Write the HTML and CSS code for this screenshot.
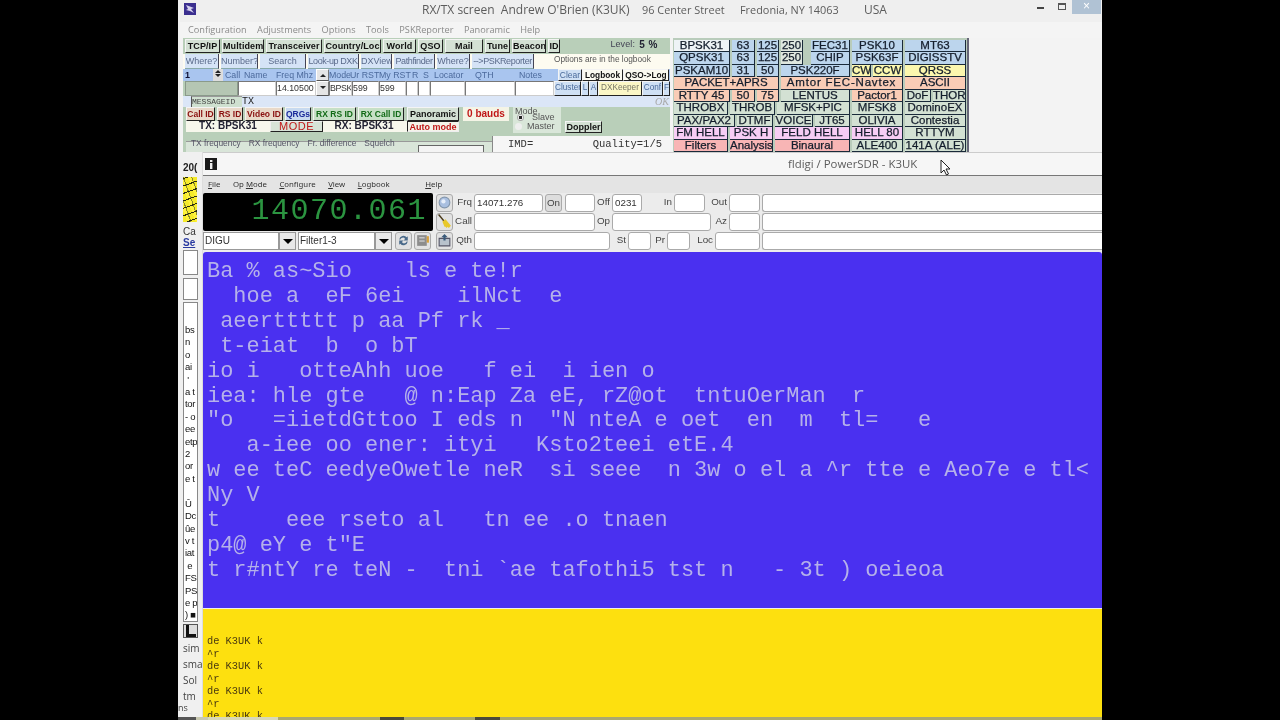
FILE: index.html
```html
<!DOCTYPE html>
<html lang="en">
<head>
<meta charset="utf-8">
<title>fldigi / PowerSDR - K3UK</title>
<link rel="stylesheet" href="styles.css">
</head>
<body>
<main class="stage">
  <section class="rx">
    <header class="rx-title">
      <svg class="rx-icon" viewBox="0 0 12 12"><rect width="12" height="12" fill="#3b2f8f"/><path d="M2 2l8 3-3 1 3 4-4-2-4-1 2-1z" fill="#d7d3ee"/></svg>
      <div class="rx-title-text"><span>RX/TX screen&nbsp; Andrew O'Brien (K3UK)</span><span class="narrow">96 Center Street</span><span class="narrow">Fredonia, NY 14063</span><span>USA</span></div>
      <div class="win-ctl"><span class="ctl-min"></span><span class="ctl-max"></span><span class="ctl-close">×</span></div>
    </header>
    <nav class="rx-menu"><span>Configuration</span><span>Adjustments</span><span>Options</span><span>Tools</span><span>PSKReporter</span><span>Panoramic</span><span>Help</span></nav>
    <div class="rx-panels">
      <div class="left-panel">
        <div class="row-a">
          <b class="btn">TCP/IP</b><b class="btn">Multidem</b><b class="btn">Transceiver</b><b class="btn">Country/Loc</b><b class="btn">World</b><b class="btn">QSO</b><b class="btn">Mail</b><b class="btn">Tune</b><b class="btn">Beacon</b><b class="btn">ID</b>
          <span class="level">Level:</span><b class="level-val">5 %</b>
        </div>
        <div class="row-b">
          <span class="tab">Where?</span><span class="tab">Number?</span><span class="tab">Search</span><span class="tab tight">Look-up DXK</span><span class="tab">DXView</span><span class="tab tight">Pathfinder</span><span class="tab">Where?</span><span class="tab tight">--&gt;PSKReporter</span><span class="note">Options are in the logbook</span>
        </div>
        <div class="row-c">
          <b class="one">1</b><span class="spin"><i></i><i></i></span><span>Call</span><span>Name</span><span>Freq Mhz</span><span class="arrow up"></span><span>Mode</span><span>Ur RST</span><span>My RST</span><span>R</span><span>S</span><span>Locator</span><span>QTH</span><span>Notes</span><span class="btn lite">Clear</span><b class="btn plain">Logbook</b><b class="btn plain">QSO-&gt;Log</b>
        </div>
        <div class="row-d">
          <span class="gray"></span><span class="cell"></span><span class="cell">14.10500</span><span class="arrow down"></span><span class="cell tight">BPSK</span><span class="cell">599</span><span class="cell">599</span><span class="cell"></span><span class="cell"></span><span class="cell"></span><span class="cell"></span><span class="cell"></span><span class="btn lite">Cluster</span><span class="btn lite">L</span><span class="btn lite">A</span><span class="btn cream">DXKeeper</span><span class="btn lite">Conf</span><span class="btn lite">F</span>
        </div>
        <div class="row-e"><span class="msg-tab">MESSAGEID</span><span class="msg-tx">TX</span><span class="ok">OK</span></div>
        <div class="mid">
          <div class="mid-left">
            <div class="row-f">
              <b class="btn red">Call ID</b><b class="btn red">RS ID</b><b class="btn red">Video ID</b><b class="btn blue">QRGs</b><b class="btn green">RX RS ID</b><b class="btn green">RX Call ID</b>
            </div>
            <div class="row-g"><b>TX: BPSK31</b><span class="btn mode">MODE</span><b>RX: BPSK31</b></div>
          </div>
          <div class="mid-pan">
            <b class="btn">Panoramic</b><b class="bauds">0 bauds</b><b class="btn auto">Auto mode</b>
          </div>
          <div class="mode-group">
            <span class="mode-label">Mode</span>
            <span class="radio-row"><i class="radio on"></i>Slave</span>
            <span class="radio-row"><i class="radio"></i>Master</span>
          </div>
          <b class="btn doppler">Doppler</b>
        </div>
        <div class="row-h">
          <div class="freq-group"><span>TX frequency</span><span>RX frequency</span><span>Fr. difference</span><span>Squelch</span><i class="sq-box"></i></div>
          <div class="imd"><span>IMD=</span><span>Quality=1/5</span></div>
        </div>
      </div>
      <div class="modes">
        <div class="m r12"><b class="sel">BPSK31</b><b class="bl">63</b><b class="bl">125</b><b class="wh">250</b><b class="bl fec">FEC31</b><b class="bl">PSK10</b><b class="bl">MT63</b></div>
        <div class="m r12"><b class="bl">QPSK31</b><b class="bl">63</b><b class="bl">125</b><b class="wh">250</b><b class="bl fec">CHIP</b><b class="bl">PSK63F</b><b class="bl">DIGISSTV</b></div>
        <div class="m r3"><b class="bl">PSKAM10</b><b class="bl">31</b><b class="bl">50</b><b class="bl">PSK220F</b><b class="ye">CW</b><b class="ye">CCW</b><b class="ye">QRSS</b></div>
        <div class="m r4"><b class="sa">PACKET+APRS</b><b class="sa wide">Amtor FEC-Navtex</b><b class="sa">ASCII</b></div>
        <div class="m r5"><b class="sa">RTTY 45</b><b class="sa">50</b><b class="sa">75</b><b class="gr">LENTUS</b><b class="sa">Pactor1</b><b class="gr">DoF</b><b class="gr">THOR</b></div>
        <div class="m r6"><b class="gr">THROBX</b><b class="gr">THROB</b><b class="gr">MFSK+PIC</b><b class="gr">MFSK8</b><b class="gr">DominoEX</b></div>
        <div class="m r7"><b class="gr">PAX/PAX2</b><b class="gr">DTMF</b><b class="gr">VOICE</b><b class="gr">JT65</b><b class="gr">OLIVIA</b><b class="gr">Contestia</b></div>
        <div class="m r8"><b class="pi">FM HELL</b><b class="pi">PSK H</b><b class="pi">FELD HELL</b><b class="pi">HELL 80</b><b class="gr">RTTYM</b></div>
        <div class="m r8"><b class="re">Filters</b><b class="re">Analysis</b><b class="re">Binaural</b><b class="gr">ALE400</b><b class="gr">141A (ALE)</b></div>
      </div>
    </div>
    <aside class="strip">
      <span class="strip-20">20(</span>
      <span class="strip-wf"></span>
      <span class="strip-ca">Ca</span>
      <span class="strip-se">Se</span>
      <span class="strip-box s1"></span>
      <span class="strip-box s2"></span>
      <div class="strip-list"><span>bs</span><span>n</span><span>o</span><span>ai</span><span>&nbsp;'</span><span>a t</span><span>tor</span><span>- o</span><span>ee</span><span>etp</span><span>2</span><span>or</span><span>e t</span><span>&nbsp;</span><span>Û</span><span>Dc</span><span>ûe</span><span>v t</span><span>iat</span><span>&nbsp;e</span><span>FS</span><span>PS</span><span>e p</span><span>) ■</span></div>
      <span class="strip-btn"><svg viewBox="0 0 12 12"><path d="M2 0h3v9h7v3H2z" fill="#111"/></svg></span>
      <div class="strip-words"><span>sim</span><span>sma</span><span>Sol</span><span>tm</span></div>
    </aside>
  </section>

  <section class="fl">
    <header class="fl-title">
      <svg class="fl-icon" viewBox="0 0 12 12"><rect width="12" height="12" fill="#1a1a1a"/><rect x="5" y="2" width="2.4" height="2" fill="#eee"/><rect x="5" y="5" width="2.4" height="6" fill="#eee"/></svg>
      <span class="fl-name">fldigi / PowerSDR - K3UK</span>
    </header>
    <nav class="fl-menu"><span><u>F</u>ile</span><span>Op <u>M</u>ode</span><span><u>C</u>onfigure</span><span><u>V</u>iew</span><span><u>L</u>ogbook</span><span class="help"><u>H</u>elp</span></nav>
    <div class="fl-controls">
      <div class="rig">
        <div class="display">14070.061</div>
        <div class="rig-row">
          <span class="combo c1">DIGU</span><span class="drop"></span><span class="combo c2">Filter1-3</span><span class="drop"></span>
          <span class="tool t-first"><svg viewBox="0 0 14 14"><path d="M3 6a4 4 0 0 1 7-2l1-1v4H7l1.500-1.500A2.500 2.500 0 0 0 4 6zM11 8a4 4 0 0 1-7 2l-1 1V7h4L5.500 8.500A2.500 2.500 0 0 0 10 8z" fill="#4a6a8a"/></svg></span>
          <span class="tool"><svg viewBox="0 0 14 14"><rect x="2" y="2" width="9" height="10" fill="#8d8d8d"/><rect x="4" y="4" width="5" height="1" fill="#ddd"/><rect x="4" y="7" width="5" height="1" fill="#ddd"/><rect x="11" y="3" width="2" height="6" fill="#d8a03a"/></svg></span>
        </div>
      </div>
      <div class="log-icons">
        <span class="tool"><svg viewBox="0 0 14 14"><circle cx="7" cy="7" r="5" fill="#a9bfe0" stroke="#8296ad"/><circle cx="6" cy="6" r="2" fill="#e6eefa"/></svg></span>
        <span class="tool"><svg viewBox="0 0 14 14"><path d="M1 1l1-1 5 6-1 1z" fill="#4a3a1a"/><path d="M5 7l3-2 5 6-2 2-1-1-1 1-1-1-1 0z" fill="#e8c82a"/></svg></span>
        <span class="tool"><svg viewBox="0 0 14 14"><path d="M2 5h10v7H2z" fill="#b8c2cc" stroke="#556"/><path d="M7 1l3 3H8v3H6V4H4z" fill="#3a5a7a"/></svg></span>
      </div>
      <div class="log">
        <div class="log-row lr1"><label>Frq</label><span class="inp">14071.276</span><span class="on">On</span><span class="inp"></span><label>Off</label><span class="inp">0231</span><label>In</label><span class="inp"></span><label>Out</label><span class="inp"></span><span class="inp long"></span></div>
        <div class="log-row lr2"><label>Call</label><span class="inp"></span><label>Op</label><span class="inp"></span><label>Az</label><span class="inp"></span><span class="inp long"></span></div>
        <div class="log-row lr3"><label>Qth</label><span class="inp"></span><label>St</label><span class="inp"></span><label>Pr</label><span class="inp"></span><label>Loc</label><span class="inp"></span><span class="inp long"></span></div>
      </div>
    </div>
    <pre class="rx-text">Ba % as~Sio    ls e te!r
  hoe a  eF 6ei    ilNct  e
 aeerttttt p aa Pf rk _
 t-eiat  b  o bT
io i   otteAhh uoe   f ei  i ien o
iea: hle gte   @ n:Eap Za eE, rZ@ot  tntuOerMan  r
"o   =iietdGttoo I eds n  "N nteA e oet  en  m  tl=   e
   a-iee oo ener: ityi   Ksto2teei etE.4
w ee teC eedyeOwetle neR  si seee  n 3w o el a ^r tte e Aeo7e e tl&lt;
Ny V
t     eee rseto al   tn ee .o tnaen
p4@ eY e t"E
t r#ntY re teN -  tni `ae tafothi5 tst n   - 3t ) oeieoa</pre>
    <pre class="tx-text">de K3UK k
^r
de K3UK k
^r
de K3UK k
^r
de K3UK k</pre>
  </section>

  <svg class="cursor" viewBox="0 0 12 18"><path d="M1 1v13l3-3 2.500 5 2-1-2.500-5h4z" fill="#fff" stroke="#222" stroke-width="1"/></svg>
  <span class="ns">ns</span>
  <div class="taskbar"></div>
</main>
</body>
</html>
```
FILE: styles.css
```css
* { box-sizing: border-box; }
html, body { margin: 0; height: 100%; background: #000; overflow: hidden; }
.stage { position: relative; width: 924px; height: 720px; margin-left: 178px; background: #f0f0f0; overflow: hidden; font-family: "Liberation Sans", Arial, sans-serif; filter: blur(.3px); }
i { font-style: normal; display: block; }
.tight { letter-spacing: -.4px; }

/* back window */
.rx { position: absolute; left: 2px; top: 0; width: 922px; height: 720px; background: #f0f0f0; display: flex; flex-direction: column; }
.rx-title { height: 22px; display: flex; align-items: center; position: relative; flex: none; background: #efefef; }
.rx-icon { width: 12px; height: 12px; margin: -4px 0 0 4px; flex: none; }
.rx-title-text { margin-left: 226px; display: grid; grid-template-columns: 220px 98px 124px auto; font: 12px/14px "Open Sans", sans-serif; color: #5c5c5c; margin-top: -3px; white-space: nowrap; }
.narrow { font-size: 10.900px; }
.win-ctl { position: absolute; right: 1px; top: 0; display: flex; height: 14px; }
.ctl-min { width: 7px; height: 2px; background: #444; margin: 7px 14px 0 0; }
.ctl-max { width: 8px; height: 7px; border: 1px solid #555; border-top-width: 2px; margin: 3px 6px 0 0; }
.ctl-close { width: 29px; background: #b0c2d4; color: #fff; text-align: center; font-size: 12px; line-height: 13px; }
.rx-menu { height: 16px; flex: none; padding-left: 8px; display: flex; gap: 10.500px; font: 9.200px/15px "Open Sans", sans-serif; color: #8a8a8a; background: #f4f4f4; white-space: nowrap; }
.rx-panels { height: 114px; flex: none; display: flex; background: #f3f3f3; }

.left-panel { width: 487px; margin-left: 3px; height: 114px; background: #b9cfb9; position: relative; display: flex; flex-direction: column; flex: none; overflow: hidden; }
.btn { display: block; background: #d4e1d4; border: 1px solid; border-color: #f4f4f4 #222 #222 #f4f4f4; text-align: center; white-space: nowrap; overflow: hidden; color: #111; }
.row-a { height: 14px; flex: none; margin: 1px 0; padding-left: 2px; display: grid; grid-template-columns: 35px 42px 56px 57px 33px 25px 38px 25px 34px 12px 73px 21px; column-gap: 2px; font-size: 9px; line-height: 12px; letter-spacing: .1px; align-items: stretch; }
.level { font-size: 9px; color: #445; text-align: right; line-height: 11px; }
.level-val { font-size: 10px; line-height: 11px; text-align: right; color: #223; letter-spacing: .5px; white-space: nowrap; }
.row-b { height: 15px; flex: none; background: #fdfbf0; padding-left: 2px; display: grid; grid-template-columns: 34px 37px 46px 51px 31px 41px 33px 62px 95px; column-gap: 2px; font-size: 9px; line-height: 14px; }
.tab { background: #d5e3f6; border-right: 1px solid #445; border-bottom: 1px solid #8aa; text-align: center; color: #5a6a8a; white-space: nowrap; overflow: hidden; }
.note { margin-left: 18px; width: 100px; color: #555; font-size: 8.300px; line-height: 11px; white-space: nowrap; }
.row-c { height: 12px; flex: none; padding-left: 2px; background: #a9c5ef; display: grid; grid-template-columns: 28px 12px 19px 32px 40px 13px 21px 29px 33px 11px 11px 41px 44px 39px 24px 41px 46px; font-size: 8.800px; line-height: 12px; color: #4c6a9c; white-space: nowrap; }
.one { color: #113; font-size: 9px; }
.spin { display: flex; flex-direction: column; width: 10px; align-items: center; background: #ddd; }
.spin i { width: 0; height: 0; border: 3px solid transparent; border-top-width: 0; border-bottom: 3px solid #222; margin: 1px 0 0; }
.spin i + i { border-bottom-width: 0; border-top: 3px solid #222; border-bottom-color: transparent; }
.arrow { background: #e5e5e5; display: block; border: 1px solid; border-color: #fff #777 #555 #fff; position: relative; }
.arrow::after { content: ""; position: absolute; left: 3px; top: 4px; border: 3px solid transparent; border-top-width: 0; border-bottom: 3px solid #222; }
.arrow.down::after { border-bottom-width: 0; border-top: 3px solid #222; border-bottom-color: transparent; }
.lite { background: #cfe0f4; color: #4a6a9a; font-size: 8.500px; line-height: 10px; }
.plain { background: #fbfaf0; font-size: 8.300px; line-height: 10px; }
.row-d { height: 15px; flex: none; padding-left: 2px; background: #b9cfb9; display: grid; grid-template-columns: 53px 38px 40px 13px 23px 27px 27px 12px 12px 35px 50px 39px 27px 8px 9px 44px 21px 7px; font-size: 8.800px; line-height: 13px; color: #333; white-space: nowrap; }
.gray { background: #b5c6b3; border: 1px solid #8a9a8a; }
.cell { background: #fff; border: 1px solid #777; border-right-color: #ccc; border-bottom-color: #ccc; overflow: hidden; }
.cream { background: #fbf7c6; color: #776; }
.row-d .btn { font-size: 8.200px; padding: 0; line-height: 12px; }
.row-e { height: 11px; flex: none; background: #dbe6f7; display: flex; position: relative; font: 8px/11px "Liberation Mono", monospace; color: #444; padding-left: 8px; }
.msg-tab { background: #cfe0d0; border-left: 1px solid #555; border-top: 1px solid #999; width: 51px; line-height: 10px; }
.msg-tx { font: 10px/11px "Liberation Mono", monospace; color: #222; }
.ok { position: absolute; right: 1px; top: 0; font: italic 10px/11px "Liberation Serif", serif; color: #a9a9a9; }

.mid { height: 26px; flex: none; display: flex; }
.mid-left { width: 224px; padding-left: 3px; flex: none; display: flex; flex-direction: column; }
.row-f { height: 14px; flex: none; display: grid; grid-template-columns: 29px 26px 38px 26px 43px 46px; column-gap: 2px; font-size: 8.500px; line-height: 12px; }
.red { color: #8a1010; background: #e9d9c9; }
.blue { color: #1a2a9a; background: #c8daf0; }
.green { color: #116a16; background: #c7e0c7; }
.row-g { height: 11px; flex: none; display: grid; grid-template-columns: 84px 53px 82px; font-size: 10px; line-height: 10px; background: #f7f7ec; text-align: center; color: #223; }
.mode { color: #c01818; font-size: 11px; line-height: 9px; background: #d7e3d7; border-color: #eee #222 #222 #eee; letter-spacing: .5px; }
.mid-pan { width: 106px; flex: none; display: grid; grid-template-columns: 52px 46px; column-gap: 4px; grid-template-rows: 14px 11px; font-size: 9px; line-height: 12px; }
.bauds { color: #c01818; font-size: 10px; background: #f4f4e6; text-align: center; line-height: 14px; white-space: nowrap; }
.auto { color: #c01818; background: #f4f4ea; font-size: 9px; line-height: 10px; border-color: #222 #eee #eee #222; }
.mode-group { width: 48px; flex: none; background: #d9e6d9; font-size: 9px; line-height: 8.500px; color: #555; padding-left: 2px; display: flex; flex-direction: column; }
.mode-label { height: 6px; }
.radio-row { display: flex; gap: 5px; align-items: center; height: 9px; }
.radio { width: 7px; height: 7px; border-radius: 50%; background: #eee; flex: none; }
.radio.on { background: radial-gradient(#222 0 1.500px, #eee 2px); }
.doppler { width: 37px; height: 12px; margin: 14px 0 0 4px; font-size: 9px; line-height: 10px; flex: none; }

.row-h { height: 20px; flex: none; margin-top: 3px; display: flex; overflow: hidden; }
.freq-group { width: 306px; margin-left: 3px; flex: none; height: 17px; display: flex; gap: 8px; font-size: 8.400px; color: #556; padding: 2px 0 0 5px; line-height: 10px; white-space: nowrap; background: linear-gradient(#b9cfb9 0 5px, #999 5px 6px, #d9e5d9 6px); position: relative; }
.sq-box { width: 66px; height: 11px; background: #f4f4f4; border: 1px solid #666; margin: 7px 0 0 15px; flex: none; }
.imd { flex: 1; background: #f6f6f6; display: flex; justify-content: space-between; font: 10.500px/16px "Liberation Mono", monospace; color: #333; padding: 0 8px 0 15px; border-left: 1px solid #888; }

.modes { width: 296px; margin-left: 3px; height: 114px; flex: none; background: #b9ccbb; border-right: 2px solid #667; padding: 1.500px 0 0 1px; display: flex; flex-direction: column; overflow: hidden; }
.m { height: 12.500px; flex: none; display: grid; column-gap: 2px; font-size: 11.500px; line-height: 11px; }
.m b { font-weight: 400; -webkit-text-stroke: .25px #111; color: #14233a; text-align: center; border: solid #1a2a3a; border-width: 0 1px 1px 0; white-space: nowrap; overflow: hidden; }
.r12 { grid-template-columns: 56px 23px 22px 22px 45px 51px 61px; }
.r3 { grid-template-columns: 56px 23px 22px 69px 19px 30px 61px; }
.r4 { grid-template-columns: 105px 122px 61px; }
.r5 { grid-template-columns: 56px 23px 22px 69px 51px 26px 33px; }
.r6 { grid-template-columns: 54px 45px 73px 51px 61px; }
.r7 { grid-template-columns: 61px 36px 38px 35px 51px 61px; }
.r8 { grid-template-columns: 54px 43px 75px 51px 61px; }
.m .fec { margin-left: 6px; }
.m .wide { letter-spacing: .8px; }
.sel { background: #eef3f6; }
.bl { background: #bcd5ed; }
.wh { background: #dfe7df; }
.ye { background: #fbf7ae; }
.sa { background: #f9ccb6; }
.gr { background: #d3e1d3; }
.pi { background: #f7cdf5; }
.re { background: #f8b5b5; }

/* left strip of back window */
.strip { width: 22px; flex: 1; display: flex; flex-direction: column; align-items: flex-start; background: #f0f0f0; }
.strip-20 { font: bold 10px/12px "Liberation Sans", sans-serif; height: 25px; padding: 10px 0 0 3px; color: #222; overflow: hidden; width: 22px; white-space: nowrap; }
.strip-wf { width: 14px; height: 45px; margin-left: 3px; background: repeating-linear-gradient(-20deg, transparent 0 3px, #2a2a10 3px 4px, transparent 4px 7px), repeating-linear-gradient(70deg, #f5ea2a 0 4px, #fff23c 4px 7px, #8a8a2a 7px 8px); }
.strip-ca { font: 10px/11px "Liberation Sans", sans-serif; margin: 4px 0 0 3px; color: #333; }
.strip-se { font: bold 10px/12px "Liberation Sans", sans-serif; margin: 0 0 0 3px; color: #2a3aa0; text-decoration: underline; }
.strip-box { width: 15px; background: #fff; border: 1px solid #888; margin-left: 3px; flex: none; }
.s1 { height: 25px; margin-top: 1px; }
.s2 { height: 22px; margin-top: 3px; }
.strip-list { width: 15px; height: 320px; margin: 2px 0 0 3px; background: #fff; border: 1px solid #888; padding: 21px 0 0 1px; flex: none; overflow: hidden; font: 9.500px/12.400px "Liberation Sans", sans-serif; letter-spacing: -.3px; color: #111; display: flex; flex-direction: column; white-space: nowrap; }
.strip-btn { width: 15px; height: 14px; margin: 2px 0 0 3px; background: #ddd; border: 1px solid #555; flex: none; display: block; }
.strip-btn svg { display: block; width: 12px; height: 12px; }
.strip-words { margin: 2px 0 0 3px; font: 10px/16px "Open Sans", sans-serif; color: #444; display: flex; flex-direction: column; white-space: nowrap; width: 20px; overflow: hidden; }
.ns { position: absolute; left: 0; top: 702px; font: 9px/11px "Open Sans", sans-serif; color: #444; }

/* front window */
.fl { position: absolute; left: 24px; top: 152px; width: 900px; height: 568px; background: #f0f0f0; display: flex; flex-direction: column; border-left: 1px solid #ddd; }
.fl-title { height: 24px; flex: none; background: #f6f6f6; border-top: 1px solid #ccc; border-bottom: 1px solid #777; display: flex; align-items: center; position: relative; }
.fl-icon { width: 12px; height: 12px; margin-left: 2px; flex: none; }
.fl-name { position: absolute; left: 585px; top: 3px; font: 11.400px/15px "Open Sans", sans-serif; color: #5c5c5c; white-space: nowrap; }
.fl-menu { height: 17px; flex: none; padding-left: 5px; display: flex; gap: 12.500px; font: 7.800px/16px "Noto Sans", sans-serif; color: #333; background: #e4e4e4; white-space: nowrap; }
.help { margin-left: 23px; }
.fl-controls { height: 59px; flex: none; display: flex; background: #ececec; }
.rig { width: 230px; flex: none; display: flex; flex-direction: column; }
.display { height: 38px; background: #000; border-radius: 2px; color: #2b9440; font: 30px/37px "Liberation Mono", monospace; letter-spacing: 1.500px; text-align: right; padding-right: 6px; flex: none; }
.rig-row { height: 18px; margin-top: 1px; display: flex; font-size: 10px; line-height: 16px; color: #333; }
.combo { background: #fff; border: 1px solid #999; padding-left: 1px; flex: none; }
.c1 { width: 76px; }
.c2 { width: 77px; margin-left: 2px; }
.drop { width: 17px; background: #e8e8e8; border: 1px solid #999; position: relative; flex: none; }
.drop::after { content: ""; position: absolute; left: 3px; top: 6px; border: 5px solid transparent; border-top: 5px solid #000; border-bottom-width: 0; }
.tool { width: 17px; height: 18px; background: #e2e2e2; border: 1px solid #aaa; border-radius: 3px; display: block; margin-left: 2px; flex: none; }
.tool svg { display: block; width: 15px; height: 15px; }
.rig-row .t-first { margin-left: 3px; }
.log-icons { width: 20px; margin: 1px 0 0 1px; flex: none; display: flex; flex-direction: column; gap: 1px; }
.log { flex: 1; padding-top: 1px; display: flex; flex-direction: column; gap: 1px; }
.log-row { height: 18px; display: grid; font-size: 9.800px; line-height: 16px; color: #444; }
.log-row label { text-align: right; padding-right: 2px; white-space: nowrap; }
.inp { background: #fff; border: 1px solid #aaa; border-radius: 3px; padding-left: 2px; color: #333; white-space: nowrap; overflow: hidden; }
.on { background: #ddd; border: 1px solid #aaa; border-radius: 3px; text-align: center; margin: 0 3px 0 2px; }
.long { margin-left: 2px; border-right: 0; border-radius: 3px 0 0 3px; }
.lr1 { grid-template-columns: 20px 69px 22px 30px 17px 30px 32px 31px 24px 31px 342px; }
.lr2 { grid-template-columns: 20px 121px 17px 99px 18px 31px 342px; }
.lr3 { grid-template-columns: 20px 136px 18px 23px 16px 23px 25px 45px 342px; }
.rx-text { margin: 0; height: 356px; flex: none; background: #4a30f0; border-radius: 3px 3px 0 0; color: #b5b1ea; font: 21.950px/24.900px "Liberation Mono", monospace; padding: 8px 0 0 4px; overflow: hidden; white-space: pre; }
.tx-text { margin: 0; flex: 1; background: #fde00f; color: #4a3a10; font: 10.350px/12.500px "Liberation Mono", monospace; padding: 26px 0 0 4px; overflow: hidden; border-top: 1px solid #eee; }
.cursor { position: absolute; left: 762px; top: 159px; width: 12px; height: 18px; }
.taskbar { position: absolute; left: 0; right: 0; bottom: 0; height: 3px; background: linear-gradient(90deg, #555 0 18px, #c8c8b0 18px 30px, #d8d8b8 30px 100px, #a9a870 100px 202px, #4a4a3a 202px 226px, #a9a870 226px 297px, #4a4a3a 297px 322px, #a9a870 322px); }
```
